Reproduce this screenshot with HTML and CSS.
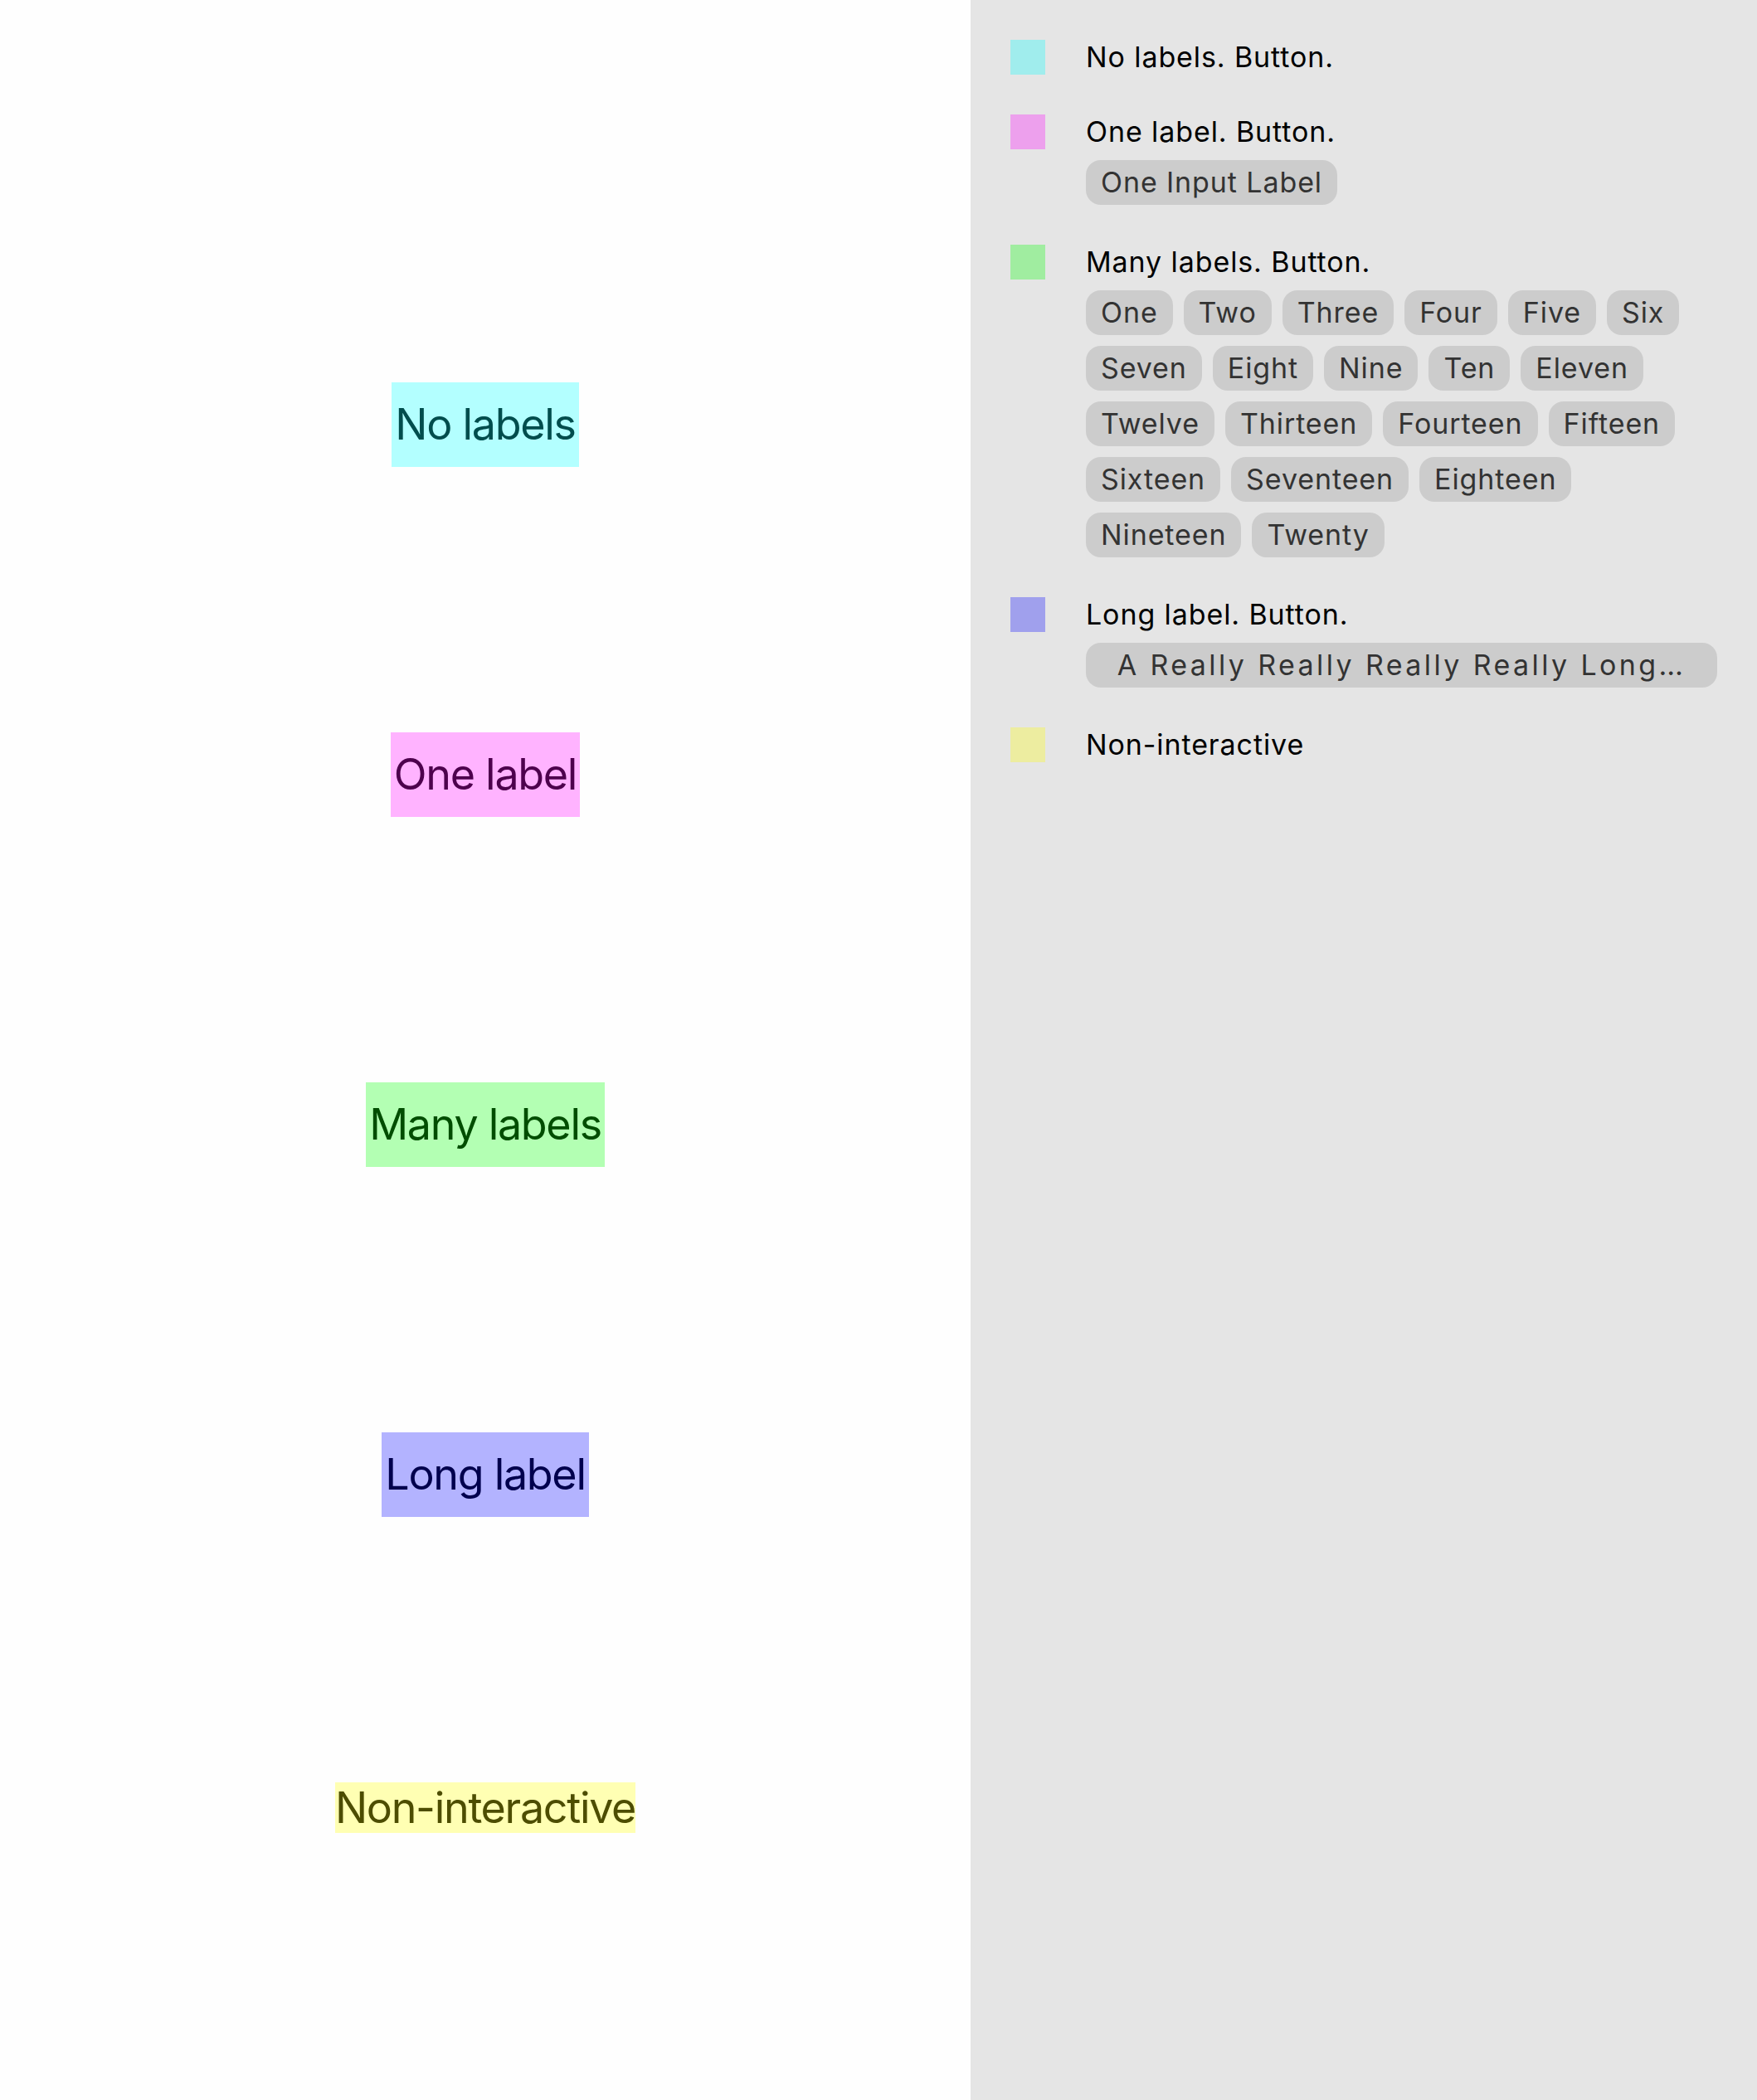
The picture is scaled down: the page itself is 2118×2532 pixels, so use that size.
FILE: index.html
```html
<!DOCTYPE html>
<html lang="en">
<head>
<meta charset="utf-8">
<title>Accessibility labels</title>
<link rel="stylesheet" href="styles.css">
</head>
<body>
<div class="screen">
  <main class="canvas">
    <div class="target cyan">No labels</div>
    <div class="target pink">One label</div>
    <div class="target green">Many labels</div>
    <div class="target blue">Long label</div>
    <div class="target yellow plain">Non-interactive</div>
  </main>
  <aside class="panel">
    <div class="item">
      <span class="swatch sw-cyan"></span>
      <div class="info">
        <div class="title">No labels. Button.</div>
      </div>
    </div>
    <div class="item">
      <span class="swatch sw-pink"></span>
      <div class="info">
        <div class="title">One label. Button.</div>
        <div class="chips">
          <span class="chip">One Input Label</span>
        </div>
      </div>
    </div>
    <div class="item">
      <span class="swatch sw-green"></span>
      <div class="info">
        <div class="title">Many labels. Button.</div>
        <div class="chips">
          <span class="chip">One</span>
          <span class="chip">Two</span>
          <span class="chip">Three</span>
          <span class="chip">Four</span>
          <span class="chip">Five</span>
          <span class="chip">Six</span>
          <span class="chip">Seven</span>
          <span class="chip">Eight</span>
          <span class="chip">Nine</span>
          <span class="chip">Ten</span>
          <span class="chip">Eleven</span>
          <span class="chip">Twelve</span>
          <span class="chip">Thirteen</span>
          <span class="chip">Fourteen</span>
          <span class="chip">Fifteen</span>
          <span class="chip">Sixteen</span>
          <span class="chip">Seventeen</span>
          <span class="chip">Eighteen</span>
          <span class="chip">Nineteen</span>
          <span class="chip">Twenty</span>
        </div>
      </div>
    </div>
    <div class="item">
      <span class="swatch sw-blue"></span>
      <div class="info">
        <div class="title">Long label. Button.</div>
        <div class="chips">
          <span class="chip wide">A Really Really Really Really Long…</span>
        </div>
      </div>
    </div>
    <div class="item">
      <span class="swatch sw-yellow"></span>
      <div class="info">
        <div class="title">Non-interactive</div>
      </div>
    </div>
  </aside>
</div>
</body>
</html>
```
FILE: styles.css
```css
html, body {
  margin: 0;
  padding: 0;
}

body {
  font-family: "Inter", "Noto Sans", sans-serif;
  background: #fefefe;
}

.screen {
  display: flex;
  width: 2118px;
  height: 2532px;
  overflow: hidden;
}

.canvas {
  width: 1170px;
  flex: none;
  background: #fefefe;
  display: flex;
  flex-direction: column;
  align-items: center;
  padding-top: 461px;
  gap: 320px;
  box-sizing: border-box;
}

.target {
  height: 102px;
  display: flex;
  align-items: center;
  padding: 0 4px;
  font-size: 52px;
  letter-spacing: -1.3px;
  line-height: 1;
}

.target.plain {
  height: 61px;
  padding: 0;
}

.cyan { background: #b3ffff; color: #004d4d; }
.pink { background: #ffb3ff; color: #4d004d; }
.green { background: #b3ffb3; color: #004d00; }
.blue { background: #b3b3ff; color: #00004d; }
.yellow { background: #ffffb3; color: #4d4d00; }

.panel {
  flex: 1;
  background: #e5e5e5;
  padding: 48px 48px;
  display: flex;
  flex-direction: column;
  gap: 48px;
  box-sizing: border-box;
}

.item {
  display: flex;
  align-items: flex-start;
  gap: 49px;
}

.swatch {
  width: 42px;
  height: 42px;
  flex: none;
}

.sw-cyan { background: #a0eded; }
.sw-pink { background: #eda0ed; }
.sw-green { background: #a0eda0; }
.sw-blue { background: #a0a0ed; }
.sw-yellow { background: #ededa0; }

.info {
  flex: 1;
  min-width: 0;
}

.title {
  height: 42px;
  line-height: 42px;
  font-size: 34px;
  color: #000;
  letter-spacing: 0.9px;
}

.chips {
  margin-top: 13px;
  display: flex;
  flex-wrap: wrap;
  gap: 13px;
}

.chip {
  height: 54px;
  line-height: 54px;
  padding: 0 18px;
  border-radius: 18px;
  background: #cccccc;
  color: #333333;
  font-size: 34px;
  letter-spacing: 0.9px;
  white-space: nowrap;
}

.chip.wide {
  flex: 1;
  text-align: center;
  letter-spacing: 3.4px;
  overflow: hidden;
  text-overflow: ellipsis;
}
```
